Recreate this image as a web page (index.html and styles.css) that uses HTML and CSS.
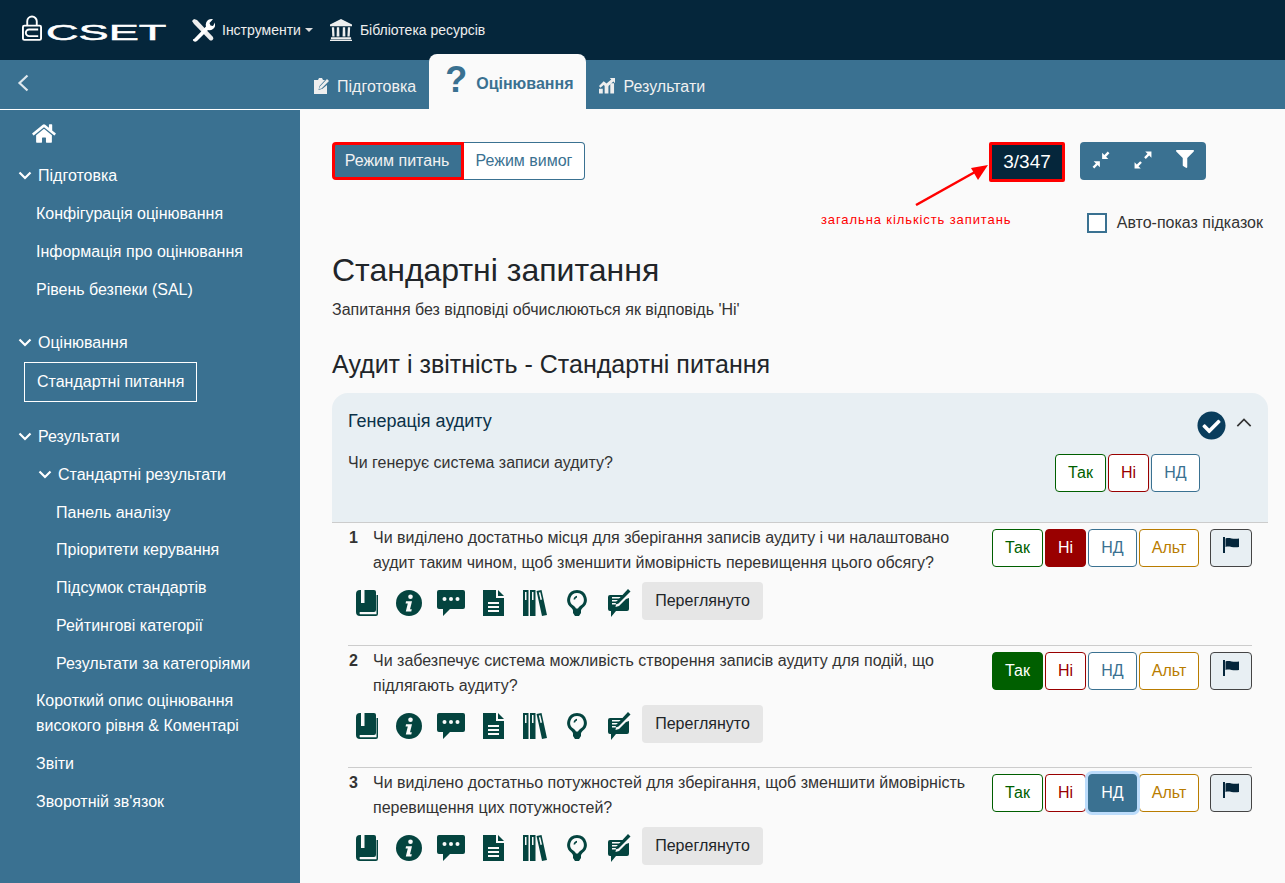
FILE: index.html
```html
<!DOCTYPE html>
<html lang="uk">
<head>
<meta charset="utf-8">
<title>CSET</title>
<link rel="stylesheet" href="styles.css">
</head>
<body>
<svg class="defs" width="0" height="0" aria-hidden="true">
  <symbol id="i-book" viewBox="0 0 22 26"><path d="M4 0h14a2 2 0 0 1 2 2v18a2 2 0 0 1-2 2H4a1.500 1.500 0 0 0 0 2.200h16.500V5H22v19a2 2 0 0 1-2 2H4a4 4 0 0 1-4-4V4a4 4 0 0 1 4-4z"/><path d="M5 0h3.500v13H5z" fill="#fafafa"/></symbol>
  <symbol id="i-info" viewBox="0 0 26 26"><circle cx="13" cy="13" r="13"/><circle cx="14.500" cy="6.800" r="2.300" fill="#fafafa"/><path d="M10 11.200h6l-2 8h1.800l-.5 2.200H9.800l2-8H9.600z" fill="#fafafa"/></symbol>
  <symbol id="i-chat" viewBox="0 0 28 26"><path d="M2 0h24a2 2 0 0 1 2 2v15a2 2 0 0 1-2 2H13l-7 7v-7H2a2 2 0 0 1-2-2V2a2 2 0 0 1 2-2z"/><circle cx="7.500" cy="9" r="2" fill="#fafafa"/><circle cx="14" cy="9" r="2" fill="#fafafa"/><circle cx="20.500" cy="9" r="2" fill="#fafafa"/></symbol>
  <symbol id="i-doc" viewBox="0 0 21 26"><path d="M0 0h13v8h8v18H0z"/><path d="M15 0l6 6h-6z"/><path d="M5 12h11v2H5zM5 16h11v2H5zM5 20h11v2H5z" fill="#fafafa"/></symbol>
  <symbol id="i-books" viewBox="0 0 24 26"><path d="M0 0h5.500v26H0zM7 0h5.500v26H7z"/><path d="M13.500 1l5-1 5.500 25-5 1z"/><path d="M2 2h1.500v8H2zM9 2h1.500v8H9zM15.800 2.600l1.500-.4 1.700 7.400-1.500.4z" fill="#fafafa"/></symbol>
  <symbol id="i-bulb" viewBox="0 0 20 26"><path d="M10 0a9.800 9.800 0 0 1 5.500 17.900q-1.300 1-1.500 2.600H6q-.2-1.600-1.500-2.600A9.800 9.800 0 0 1 10 0zm0 3a6.800 6.800 0 0 0-3.700 12.500q2.200 1.400 2.700 3h2q.5-1.600 2.700-3A6.800 6.800 0 0 0 10 3z"/><path d="M6 19h8v4l-2 3H8l-2-3z"/><path d="M6.500 9.500Q7 6.200 10 5.800v1.700q-1.600.3-1.900 2z"/></symbol>
  <symbol id="i-note" viewBox="0 0 23 28"><path d="M2 6h14l-2 2H4v1.500h8.500L11 11H4v1.500h5.500L8.500 14H4v1.500h4l-.5 2.500 3.500-1 7-7 3-1V20a2 2 0 0 1-2 2H8l-5 6v-6H2a2 2 0 0 1-2-2V8a2 2 0 0 1 2-2z"/><path d="M20 0l2.500 2.500-12 12-3 1 1-3z"/></symbol>
  <symbol id="i-flag" viewBox="0 0 16 16"><path d="M0 0h2v16H0z"/><path d="M2.500 1.500c4-1.500 7 1.200 13.500 0v8.500c-6.500 1.200-9.500-1.500-13.500 0z"/></symbol>
</svg>

<header class="topbar">
  <div class="logo">
    <svg class="logo-lock" viewBox="0 0 21 27" aria-hidden="true"><path d="M5.500 11V6.500a5 5 0 0 1 10 0V11" fill="none" stroke="#fff" stroke-width="2"/><rect x="1" y="11" width="19" height="15" rx="1.500" fill="none" stroke="#fff" stroke-width="2"/><path d="M17 15H7.500a2.500 2.500 0 0 0 0 7H17" fill="none" stroke="#fff" stroke-width="2"/></svg>
    <span class="logo-text">CSET</span>
  </div>
  <nav class="topnav">
    <a class="topnav-item tools">
      <svg class="ti-tools" viewBox="0 0 24 24" aria-hidden="true"><path d="M1 3l2-2 3 1 16 17q1 2-.5 3t-3 0L3 6z" fill="#eee"/><path d="M3 21L15 8.500q-1-4 2-6.500 2.500-1.500 5-.8L18.500 5l1 2.500 2.500.5 2-3.500q1 4-2 6.500-2.500 1.800-5 1L6 23q-2 1.500-3.500 0T3 21z" fill="#fff"/></svg>
      <span>Інструменти</span><i class="caret"></i>
    </a>
    <a class="topnav-item">
      <svg class="ti-bank" viewBox="0 0 24 24" aria-hidden="true"><path d="M12 0l12 6v2H0V6z" fill="#eee"/><path d="M2 9h2.500l.5 10H2.500zM7.500 9H10l.3 10H7.200zM14 9h2.500l.3 10h-3.100zM19.500 9H22l-.5 10H19z" fill="#eee"/><path d="M1 20h22v2H1zM0 22.500h24V24H0z" fill="#eee"/></svg>
      <span>Бібліотека ресурсів</span>
    </a>
  </nav>
</header>

<div class="subbar">
  <div class="subbar-left">
    <svg class="back" viewBox="0 0 12 18" aria-hidden="true"><path d="M10.500 1.500L2.500 9l8 7.500" fill="none" stroke="#dfe8ee" stroke-width="2.200"/></svg>
  </div>
  <div class="tabs">
    <a class="tab">
      <svg class="tab-ic" viewBox="0 0 16 17" aria-hidden="true"><path d="M1 3h4l1-2h3l1 2h2l-5.500 6-1 4 4-1.200L14 8v9H1z" fill="#eee"/><path d="M14 2l2 2-7.500 7.500-2.500.7.700-2.500z" fill="#eee"/></svg>
      <span>Підготовка</span>
    </a>
    <a class="tab active"><span class="q">?</span><span>Оцінювання</span></a>
    <a class="tab">
      <svg class="tab-ic" viewBox="0 0 17 17" aria-hidden="true"><path d="M0 12h4v5H0zM6 9h4v8H6zM12 6h4v11h-4z" fill="#eee"/><path d="M0 9l5-5 3 2.500L13 2l-1.500-1.500H17V6l-1.700-1.700L8 11 5 8l-3.500 3z" fill="#eee"/></svg>
      <span>Результати</span>
    </a>
  </div>
</div>

<div class="app">
  <aside class="sidebar">
    <svg class="home" viewBox="0 0 576 512" aria-hidden="true"><path d="M280.37 148.26L96 300.11V464a16 16 0 0 0 16 16l112.06-.29a16 16 0 0 0 15.92-16V368a16 16 0 0 1 16-16h64a16 16 0 0 1 16 16v95.64a16 16 0 0 0 16 16.05L464 480a16 16 0 0 0 16-16V300L295.67 148.26a12.19 12.19 0 0 0-15.3 0zM571.6 251.47L488 182.56V44.05a12 12 0 0 0-12-12h-56a12 12 0 0 0-12 12v72.61L318.47 43a48 48 0 0 0-61 0L4.34 251.47a12 12 0 0 0-1.6 16.9l25.5 31A12 12 0 0 0 45.15 301l235.22-193.74a12.19 12.19 0 0 1 15.3 0L530.9 301a12 12 0 0 0 16.9-1.6l25.5-31a12 12 0 0 0-1.7-16.93z"/></svg>
    <a class="side head"><svg class="chev" viewBox="0 0 14 9"><path d="M1.500 1.500L7 7l5.500-5.500"/></svg>Підготовка</a>
    <a class="side l1">Конфігурація оцінювання</a>
    <a class="side l1">Інформація про оцінювання</a>
    <a class="side l1">Рівень безпеки (SAL)</a>
    <a class="side head gap"><svg class="chev" viewBox="0 0 14 9"><path d="M1.500 1.500L7 7l5.500-5.500"/></svg>Оцінювання</a>
    <a class="side current">Стандартні питання</a>
    <a class="side head gap2"><svg class="chev" viewBox="0 0 14 9"><path d="M1.500 1.500L7 7l5.500-5.500"/></svg>Результати</a>
    <a class="side head sub"><svg class="chev" viewBox="0 0 14 9"><path d="M1.500 1.500L7 7l5.500-5.500"/></svg>Стандартні результати</a>
    <a class="side l2">Панель аналізу</a>
    <a class="side l2">Пріоритети керування</a>
    <a class="side l2">Підсумок стандартів</a>
    <a class="side l2">Рейтингові категорії</a>
    <a class="side l2">Результати за категоріями</a>
    <a class="side l1">Короткий опис оцінювання<br>високого рівня &amp; Коментарі</a>
    <a class="side l1">Звіти</a>
    <a class="side l1">Зворотній зв'язок</a>
  </aside>

  <main class="main">
    <div class="controls">
      <div class="modes">
        <button class="mode on">Режим питань</button>
        <button class="mode">Режим вимог</button>
      </div>
      <div class="counter">3/347</div>
      <div class="tools-group">
        <button class="tool"><svg viewBox="0 0 16 16" aria-hidden="true"><path d="M9 7V1.500l2 2L14 .5 15.500 2l-3 3 2 2zM7 9v5.500l-2-2-3 3L.5 14l3-3-2-2z"/></svg></button>
        <button class="tool"><svg viewBox="0 0 16 16" aria-hidden="true"><path d="M15.500 .5V6l-2-2-3 3L9 5.500l3-3-2-2zM.5 15.500V10l2 2 3-3L7 10.500l-3 3 2 2z"/></svg></button>
        <button class="tool"><svg class="filter" viewBox="0 0 512 512" aria-hidden="true"><path d="M487.976 0H24.028C2.71 0-8.047 25.866 7.058 40.971L192 225.941V432c0 7.831 3.821 15.17 10.237 19.662l80 55.98C298.02 518.69 320 507.493 320 487.98V225.941l184.947-184.97C520.021 25.896 509.338 0 487.976 0z"/></svg></button>
      </div>
    </div>
    <svg class="arrow" viewBox="0 0 74 42" aria-hidden="true"><path d="M1 41L60 8" stroke="#f00" stroke-width="2.500"/><path d="M73 1L56 4l7 12z" fill="#f00"/></svg>
    <div class="note">загальна кількість запитань</div>
    <label class="auto"><span class="box"></span>Авто-показ підказок</label>

    <h1>Стандартні запитання</h1>
    <p class="hint">Запитання без відповіді обчислюються як відповідь 'Ні'</p>
    <h2>Аудит і звітність - Стандартні питання</h2>

    <section class="card">
      <div class="card-top">
        <div class="card-title">Генерація аудиту</div>
        <svg class="done" viewBox="0 0 512 512" aria-hidden="true"><circle cx="256" cy="256" r="210" fill="#fff"/><path d="M504 256c0 136.967-111.033 248-248 248S8 392.967 8 256 119.033 8 256 8s248 111.033 248 248zM227.314 387.314l184-184c6.248-6.248 6.248-16.379 0-22.627l-22.627-22.627c-6.248-6.249-16.379-6.249-22.628 0L216 308.118l-70.059-70.059c-6.248-6.248-16.379-6.248-22.628 0l-22.627 22.627c-6.248 6.248-6.248 16.379 0 22.627l104 104c6.249 6.249 16.379 6.249 22.628.001z"/></svg>
        <svg class="collapse" viewBox="0 0 18 10" aria-hidden="true"><path d="M1.500 9L9 1.500 16.500 9"/></svg>
      </div>
      <div class="card-q">
        <div class="card-qtext">Чи генерує система записи аудиту?</div>
        <div class="answers">
          <button class="a yes">Так</button><button class="a no">Ні</button><button class="a na">НД</button>
        </div>
      </div>
    </section>

    <div class="questions">
      <article class="q-row first">
        <div class="q-main">
          <div class="q-num">1</div>
          <div class="q-text">Чи виділено достатньо місця для зберігання записів аудиту і чи налаштовано<br>аудит таким чином, щоб зменшити ймовірність перевищення цього обсягу?</div>
          <div class="answers">
            <button class="a yes">Так</button><button class="a no sel">Ні</button><button class="a na">НД</button><button class="a alt">Альт</button>
            <button class="flag"><svg viewBox="0 0 16 16"><use href="#i-flag"/></svg></button>
          </div>
        </div>
        <div class="q-tools">
          <span class="ic"><svg class="s-book"><use href="#i-book"/></svg></span>
          <span class="ic"><svg class="s-info"><use href="#i-info"/></svg></span>
          <span class="ic"><svg class="s-chat"><use href="#i-chat"/></svg></span>
          <span class="ic"><svg class="s-doc"><use href="#i-doc"/></svg></span>
          <span class="ic"><svg class="s-books"><use href="#i-books"/></svg></span>
          <span class="ic"><svg class="s-bulb"><use href="#i-bulb"/></svg></span>
          <span class="ic"><svg class="s-note"><use href="#i-note"/></svg></span>
          <button class="seen">Переглянуто</button>
        </div>
      </article>

      <article class="q-row">
        <div class="q-main">
          <div class="q-num">2</div>
          <div class="q-text">Чи забезпечує система можливість створення записів аудиту для подій, що<br>підлягають аудиту?</div>
          <div class="answers">
            <button class="a yes sel">Так</button><button class="a no">Ні</button><button class="a na">НД</button><button class="a alt">Альт</button>
            <button class="flag"><svg viewBox="0 0 16 16"><use href="#i-flag"/></svg></button>
          </div>
        </div>
        <div class="q-tools">
          <span class="ic"><svg class="s-book"><use href="#i-book"/></svg></span>
          <span class="ic"><svg class="s-info"><use href="#i-info"/></svg></span>
          <span class="ic"><svg class="s-chat"><use href="#i-chat"/></svg></span>
          <span class="ic"><svg class="s-doc"><use href="#i-doc"/></svg></span>
          <span class="ic"><svg class="s-books"><use href="#i-books"/></svg></span>
          <span class="ic"><svg class="s-bulb"><use href="#i-bulb"/></svg></span>
          <span class="ic"><svg class="s-note"><use href="#i-note"/></svg></span>
          <button class="seen">Переглянуто</button>
        </div>
      </article>

      <article class="q-row">
        <div class="q-main">
          <div class="q-num">3</div>
          <div class="q-text">Чи виділено достатньо потужностей для зберігання, щоб зменшити ймовірність<br>перевищення цих потужностей?</div>
          <div class="answers">
            <button class="a yes">Так</button><button class="a no">Ні</button><button class="a na sel focus">НД</button><button class="a alt">Альт</button>
            <button class="flag"><svg viewBox="0 0 16 16"><use href="#i-flag"/></svg></button>
          </div>
        </div>
        <div class="q-tools">
          <span class="ic"><svg class="s-book"><use href="#i-book"/></svg></span>
          <span class="ic"><svg class="s-info"><use href="#i-info"/></svg></span>
          <span class="ic"><svg class="s-chat"><use href="#i-chat"/></svg></span>
          <span class="ic"><svg class="s-doc"><use href="#i-doc"/></svg></span>
          <span class="ic"><svg class="s-books"><use href="#i-books"/></svg></span>
          <span class="ic"><svg class="s-bulb"><use href="#i-bulb"/></svg></span>
          <span class="ic"><svg class="s-note"><use href="#i-note"/></svg></span>
          <button class="seen">Переглянуто</button>
        </div>
      </article>
    </div>
  </main>
</div>
</body>
</html>
```

FILE: styles.css
```css
* { box-sizing: border-box; }
html, body { margin: 0; height: 100%; overflow: hidden; }
body { font-family: "Liberation Sans", Arial, sans-serif; font-size: 16px; color: #212529; background: #fafafa; display: flex; flex-direction: column; }
.defs { position: absolute; }
button { font-family: inherit; cursor: pointer; }

.topbar { height: 60px; flex: none; background: #05263b; display: flex; align-items: center; color: #eee; }
.logo { display: flex; align-items: center; margin-left: 22px; width: 169px; height: 60px; }
.logo-lock { width: 20px; height: 26px; margin-top: -4px; }
.logo-text { font: 400 22px/22px "Liberation Sans", sans-serif; -webkit-text-stroke: .5px #fff; color: #fff; transform: scaleX(2.05); transform-origin: left center; margin: 5px 0 0 4px; }
.topnav { display: flex; align-items: center; }
.topnav-item { display: flex; align-items: center; font-size: 14px; }
.ti-tools { width: 24px; height: 24px; margin-right: 7px; }
.ti-bank { width: 22px; height: 24px; margin-right: 8px; }
.tools { margin-right: 17px; }
.caret { width: 0; height: 0; border: 4px solid transparent; border-top-color: #ddd; border-bottom-width: 0; margin-left: 4px; }

.subbar { height: 49px; flex: none; background: #3a7191; display: flex; }
.subbar-left { width: 300px; display: flex; align-items: center; padding: 0 0 4px 17px; }
.back { width: 12px; height: 18px; }
.tabs { display: flex; align-items: stretch; }
.tab { display: flex; align-items: center; color: #f0f0f0; font-size: 16px; padding: 4px 13px 0 13px; }
.tab-ic { width: 16px; height: 17px; margin-right: 8px; margin-top: -2px; }
.tab:last-child .tab-ic { margin-right: 8px; }
.tab.active { background: #fafafa; color: #3a7191; font-weight: 700; margin-top: -6px; padding: 4px 13px 0 16px; border-radius: 8px 8px 0 0; }
.q { font-size: 36px; line-height: 36px; font-weight: 700; margin-right: 9px; margin-top: -7px; }

.app { flex: 1; display: flex; min-height: 0; }
.sidebar { width: 300px; flex: none; background: #3a7191; border-top: 1px solid #fff; padding-top: 13px; color: #fff; font-size: 16px; }
.home { display: block; width: 24px; height: 21px; margin: 0 0 13px 32px; fill: #fff; }
.side { display: block; line-height: 25px; padding: 6.375px 0; color: #fff; }
.head { padding-left: 18px; display: flex; align-items: center; }
.head.sub { padding-left: 38px; }
.head:first-of-type { margin-top: 4px; }
.gap { margin-top: 16px; }
.gap2 { margin-top: 16px; }
.chev { width: 14px; height: 9px; margin-right: 6px; fill: none; stroke: #fff; stroke-width: 2.200; }
.l1 { padding-left: 36px; }
.l2 { padding-left: 56px; }
.current { margin: 0 0 0 24px; width: 173px; height: 40px; border: 1px solid #fff; padding: 6px 0 0 12px; }

.main { flex: 1; min-width: 0; padding: 33px 17px 0 32px; position: relative; }
.controls { display: flex; align-items: flex-start; }
.modes { display: flex; margin-right: auto; }
.mode { height: 38px; font-size: 16px; border: 1px solid #3a7191; background: #fff; color: #3a7191; padding: 0 11.500px; border-radius: 0 4px 4px 0; border-left: 0; }
.mode.on { background: #3a7191; color: #f2f2f2; border: 3px solid #f00; border-radius: 4px 0 0 4px; width: 132px; padding: 0 2px 0 0; }
.counter { width: 76px; height: 40px; background: #05263b; border: 3px solid #f00; border-radius: 2px; color: #fff; font-size: 19px; line-height: 34px; text-align: center; margin-right: 15px; }
.tools-group { display: flex; height: 38px; background: #3a7191; border-radius: 4px; margin-right: 62px; width: 126px; }
.tool { width: 42px; border: 0; background: none; padding: 0 0 3px; display: flex; align-items: center; justify-content: center; }
.tool svg { width: 18px; height: 18px; fill: #fff; }
.tool svg.filter { width: 18px; height: 18px; margin-top: -2px; }
.arrow { position: absolute; left: 615px; top: 55px; width: 74px; height: 42px; }
.note { position: absolute; left: 521px; top: 103px; font-size: 13px; letter-spacing: .9px; color: #f00; line-height: 16px; }
.auto { display: flex; align-items: center; justify-content: flex-end; margin: 31px 5px 0 0; height: 20px; font-size: 16px; color: #333; }
.box { width: 20px; height: 20px; border: 2px solid #3a7191; background: #fff; margin-right: 10px; }

h1 { font-size: 32px; font-weight: 400; line-height: 38px; margin: 18px 0 0; color: #212529; }
.hint { margin: 10px 0 0; font-size: 16px; line-height: 22px; color: #333; }
h2 { font-size: 25px; font-weight: 400; line-height: 30px; margin: 28px 0 14px; color: #212529; }

.card { background: #e8eff3; border-radius: 16px 16px 0 0; border-bottom: 1px solid #ccc; height: 130px; padding: 0 16px; }
.card-top { display: flex; align-items: center; height: 61px; padding-bottom: 4px; }
.card-title { font-size: 18px; color: #0b3249; margin-right: auto; }
.done { width: 29px; height: 29px; fill: #0a3d5c; margin: 8px 10px 0 0; }
.collapse { width: 16px; height: 9px; fill: none; stroke: #333; stroke-width: 1.900; margin-top: 2px; }
.card-q { display: flex; justify-content: space-between; padding-right: 52px; }
.card-qtext { font-size: 16px; line-height: 20px; color: #333; margin-top: -1px; }

.answers { display: flex; gap: 2px; flex: none; }
.a { height: 38px; background: #fff; border-radius: 4px; border: 1px solid; font-size: 16px; padding: 0; }
.yes { width: 51px; border-color: #005f00; color: #005f00; }
.no { width: 41px; border-color: #990000; color: #990000; }
.na { width: 49px; border-color: #3a7191; color: #3a7191; }
.alt { width: 60px; border-color: #b97c00; color: #b97c00; }
.yes.sel { background: #005f00; color: #fff; }
.no.sel { background: #990000; color: #fff; }
.na.sel { background: #3a7191; color: #fff; }
.focus { box-shadow: 0 0 0 3px #bcdcfb; position: relative; }
.flag { width: 42px; height: 38px; margin-left: 9px; background: #e8eff3; border: 1px solid #444; border-radius: 4px; padding: 0 0 6px; display: flex; align-items: center; justify-content: center; }
.flag svg { width: 16px; height: 16px; fill: #05263b; }

.questions { padding: 0 16px; }
.q-row { border-top: 1px solid #ccc; height: 122px; }
.q-row.first { border-top: 0; height: 122px; }
.q-main { display: flex; align-items: flex-start; }
.q-num { width: 25px; font-weight: 700; padding-left: 1px; line-height: 25px; margin-top: 2px; font-size: 16px; color: #333; }
.q-text { flex: 1; line-height: 25px; margin-top: 2px; font-size: 16px; color: #333; white-space: nowrap; }
.answers { margin-top: 6px; }
.card-q .answers { margin-top: 0; }
.q-tools { display: flex; align-items: center; margin: 9px 0 0 -2px; height: 38px; }
.q-row .q-main { height: 50px; }
.ic { width: 42px; display: flex; justify-content: center; fill: #04443f; padding-top: 4px; }
.s-book { width: 22px; height: 26px; }
.s-info { width: 26px; height: 26px; }
.s-chat { width: 28px; height: 26px; }
.s-doc { width: 21px; height: 26px; }
.s-books { width: 24px; height: 26px; }
.s-bulb { width: 20px; height: 26px; }
.s-note { width: 23px; height: 28px; }
.seen { margin-left: 2px; width: 121px; height: 38px; background: #e6e6e6; border: 0; border-radius: 4px; font-size: 16px; color: #212529; }
```
